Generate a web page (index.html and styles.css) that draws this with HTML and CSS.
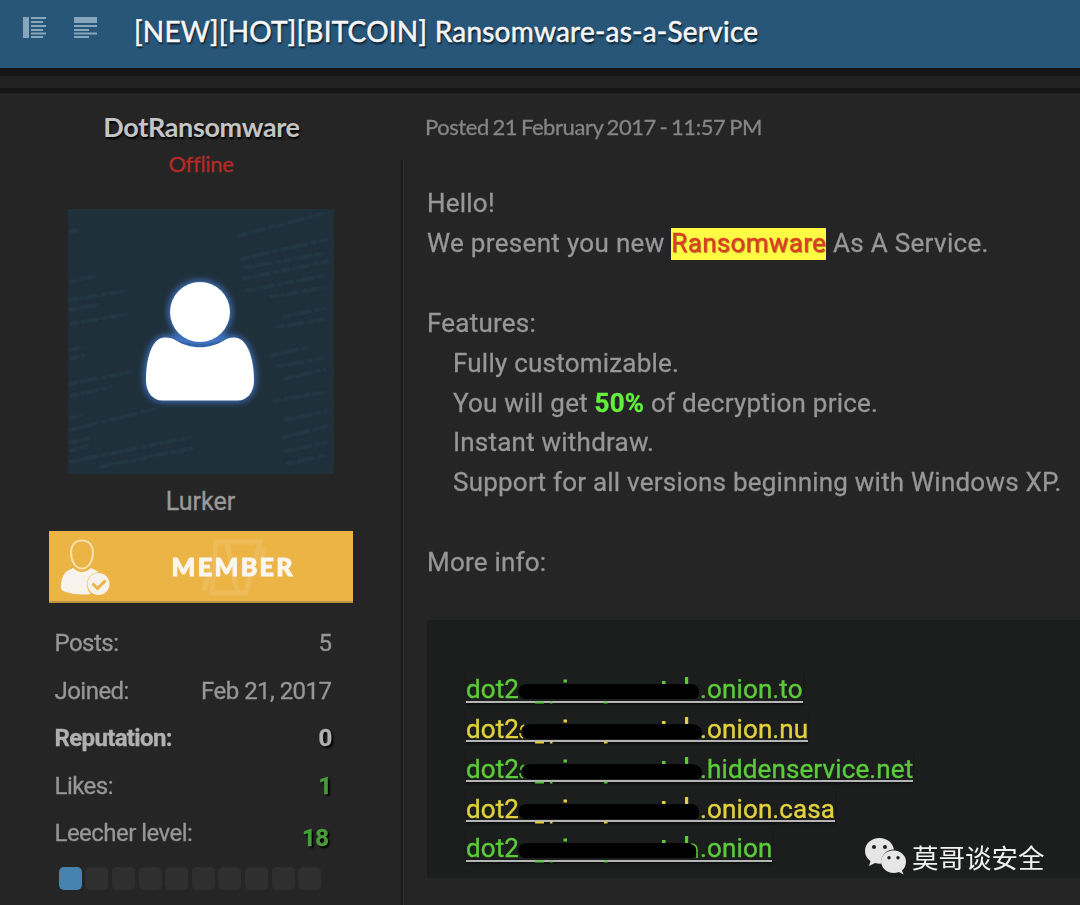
FILE: index.html
```html
<!DOCTYPE html>
<html lang="en">
<head>
<meta charset="utf-8">
<title>Ransomware-as-a-Service</title>
<link rel="stylesheet" href="styles.css">
</head>
<body>
<svg class="defs" width="0" height="0" aria-hidden="true">
  <defs>
    <g id="scraps" fill="currentColor">
      <rect x="16" y="29.500" width="9" height="2"/>
      <rect x="31" y="29.500" width="2.500" height="2"/>
      <rect x="85" y="29.500" width="3.500" height="2"/>
      <rect x="44.500" y="7.500" width="3.500" height="3"/>
      <rect x="143" y="9" width="3.500" height="3"/>
      <rect x="166" y="5" width="3.200" height="9"/>
    </g>
  </defs>
</svg>
<header class="topbar">
  <svg class="tool" width="24" height="22" viewBox="0 0 24 22"><path d="M0 0h6v21H0zM8 0h15v2H8zM8 4h12v2H8zM8 8h15v2H8zM8 12h12v2H8zM8 15.500h15v2H8zM8 19h12v2H8z"/></svg>
  <svg class="tool" width="24" height="22" viewBox="0 0 24 22"><path d="M0 0h23v6H0zM0 8h23v2H0zM0 12h15v2H0zM0 15.500h23v2H0zM0 19h15v2H0z"/></svg>
  <h1 class="title">[NEW][HOT][BITCOIN] Ransomware-as-a-Service</h1>
</header>
<div class="strip"></div>
<main class="post">
  <aside class="author">
    <div class="name">DotRansomware</div>
    <div class="status">Offline</div>
    <svg class="avatar" width="266" height="265" viewBox="0 0 266 265">
      <defs>
        <filter id="glow" x="-30%" y="-30%" width="160%" height="160%"><feGaussianBlur stdDeviation="3"/></filter>
        <filter id="soft"><feGaussianBlur stdDeviation="1"/></filter>
      </defs>
      <rect width="266" height="265" fill="#20303b"/>
      <g class="code" filter="url(#soft)">
        <path d="M2 23l10-3M1 73l26-6M1 91l55-9M1 101l32-6M2 115l58-10M2 141l12-3M2 150l15-4M1 175l62-12M2 187l42-9M1 209l13-3M2 221l88-22M2 234l20-5M2 242l18-5M2 253l38-8 84-17M32 258l94-19"/>
        <path d="M170 27l88-23M173 50l88-20M176 59l80-15M174 70l88-18M178 82l80-16M202 88l58-10M215 108l42-9M208 118l50-8M202 147l38-9M208 158l48-9M216 170l42-10M205 192l52-9M216 211l44-9M214 229l46-12M216 243l43-10M218 255l40-9"/>
      </g>
      <g>
        <g fill="#3f74c4" stroke="#3d6eb8" stroke-width="4" filter="url(#glow)"><circle cx="132" cy="103" r="30"/><path d="M99 128c-15 0-21 20-21 43 0 14 8 20 18 20h72c10 0 18-6 18-20 0-23-7-43-23-43z"/></g>
        <path fill="#3565a8" d="M99 128q33 14 64 0v15H99z"/>
        <path fill="#fff" d="M97 128.500c-13 0-19 20-19 43 0 13 8 20 16 20h76c8 0 16-7 16-20 0-23-7-43-20-43q-6 0-10 3c-14 9-34 9-48 0q-4-3-11-3z"/>
        <circle cx="132" cy="103" r="30" fill="#fff"/>
      </g>
    </svg>
    <div class="rank">Lurker</div>
    <div class="badge">
      <svg class="badge-art" width="304" height="72" viewBox="0 0 304 72">
        <g fill="none" stroke="#f0c26c" stroke-width="5" opacity=".5"><path d="M167 11h44l-14 51h-34zM155 60l7-24M211 36l4-20M178 13l10 47"/></g>
        <path d="M33 9.500c7 0 11 5 11 12 0 8-4 16-11 16s-11-8-11-16c0-7 4-12 11-12z" fill="none" stroke="#f6dfae" stroke-width="2"/>
        <path fill="#f7f3ec" d="M24 37q9 8 18 0l8 4q-12 2-12 13 0 5 4 9-15 2-28-3-3-2-2-7 1-9 6-13z"/>
        <circle cx="49.500" cy="53" r="11" fill="#f7f3ec"/>
        <path d="M43.500 52.500l5 5 8-8" fill="none" stroke="#ebb445" stroke-width="3"/>
      </svg>
      <span class="badge-text">MEMBER</span>
    </div>
    <dl class="stats">
      <div class="row"><dt>Posts:</dt><dd>5</dd></div>
      <div class="row"><dt>Joined:</dt><dd>Feb 21, 2017</dd></div>
      <div class="row strong"><dt>Reputation:</dt><dd>0</dd></div>
      <div class="row"><dt>Likes:</dt><dd class="green">1</dd></div>
      <div class="row"><dt>Leecher level:</dt><dd class="green level">18</dd></div>
    </dl>
    <div class="pips"><i class="on"></i><i></i><i></i><i></i><i></i><i></i><i></i><i></i><i></i><i></i></div>
  </aside>
  <div class="divider"></div>
  <article class="content">
    <div class="posted">Posted 21 February 2017 - 11:57 PM</div>
    <div class="message">
      <p>Hello!</p>
      <p class="offer">We present you new <mark>Ransomware</mark> As A Service.</p>
      <p>&nbsp;</p>
      <p>Features:</p>
      <ul>
        <li>Fully customizable.</li>
        <li>You will get <b>50%</b> of decryption price.</li>
        <li>Instant withdraw.</li>
        <li>Support for all versions beginning with Windows XP.</li>
      </ul>
      <p>&nbsp;</p>
      <p>More info:</p>
    </div>
    <div class="links">
      <a class="g"><span>dot2</span><svg width="181" height="36" viewBox="0 0 181 36"><use href="#scraps"/><path class="ink" d="M0 16q3-4 9-4h164q7 1 7 8t-5 7H5q-7-3-5-11z"/></svg><span>.onion.to</span></a>
      <a class="y"><span>dot2</span><svg width="181" height="36" viewBox="0 0 181 36"><use href="#scraps"/><path class="bit" d="M5 13q-4 2-3 5M1 21q0 4 3 5"/><path class="ink" d="M4 16q3-4 9-4h160q10 2 10 8t-5 7H9q-7-3-5-11z"/></svg><span>.onion.nu</span></a>
      <a class="g"><span>dot2</span><svg width="181" height="36" viewBox="0 0 181 36"><use href="#scraps"/><path class="bit" d="M5 13q-4 2-3 5M1 21q0 4 3 5"/><path class="ink" d="M4 16q3-4 9-4h160q10 2 10 8t-5 7H9q-7-3-5-11z"/></svg><span>.hiddenservice.net</span></a>
      <a class="y"><span>dot2</span><svg width="181" height="36" viewBox="0 0 181 36"><use href="#scraps"/><path class="ink" d="M0 16q3-4 9-4h164q7 1 7 8t-5 7H5q-7-3-5-11z"/></svg><span>.onion.casa</span></a>
      <a class="g"><span>dot2</span><svg width="181" height="36" viewBox="0 0 181 36"><use href="#scraps"/><path class="bit" d="M172 13q6 0 6 6v8"/><path class="ink" d="M0 16q3-4 9-4h160q7 1 8 8t-5 7H5q-7-3-5-11z"/></svg><span>.onion</span></a>
    </div>
  </article>
</main>
<div class="watermark">
  <svg width="42" height="37" viewBox="0 0 42 37">
    <path fill="#e6e6e6" fill-rule="evenodd" d="M14.500 0C6.500 0 0 5.500 0 13c0 4 2 7.500 5.500 10L4 28l6-3q3 1 6 .7A13 13 0 0 1 29 11.500C28 5 22 0 14.500 0zM9 7a2 2 0 1 1 0 4 2 2 0 0 1 0-4zm11 0a2 2 0 1 1 0 4 2 2 0 0 1 0-4z"/>
    <path fill="#e6e6e6" fill-rule="evenodd" d="M28.500 12.500C21.500 12.500 16 17.500 16 23.500S21.500 35 28.500 35q3 0 5.500-1l4.500 2.500L37 32.500q4-3.500 4-9c0-6-5.500-11-12.500-11zM24 18a1.700 1.700 0 1 1 0 3.400 1.700 1.700 0 0 1 0-3.400zm9 0a1.700 1.700 0 1 1 0 3.400 1.700 1.700 0 0 1 0-3.400z"/>
  </svg>
  <span>莫哥谈安全</span>
</div>
</body>
</html>
```
FILE: styles.css
```css
* { box-sizing: border-box; }
body {
  margin: 0;
  width: 1080px;
  height: 905px;
  overflow: hidden;
  background: #252525;
  color: #979797;
  font-family: Roboto, "Liberation Sans", sans-serif;
  display: flex;
  flex-direction: column;
}
p, ul, dl, dd, h1 { margin: 0; padding: 0; }
.defs { position: absolute; }

.topbar {
  flex: none;
  height: 68px;
  background: #275679;
  display: flex;
  align-items: flex-start;
  padding-left: 23px;
}
.tool { margin: 17px 27px 0 0; fill: #87a6bb; flex: none; }
.title {
  margin-left: 9px;
  font: 400 28px/62px Lato, sans-serif;
  letter-spacing: .23px;
  color: #f4f6f7;
  -webkit-text-stroke: .5px #f4f6f7;
  text-shadow: 1px 2px 2px rgba(0, 0, 0, .75);
  white-space: nowrap;
}
.strip {
  flex: none;
  height: 25px;
  background: #222;
  border-top: 8px solid #151515;
  border-bottom: 5px solid #151515;
}

.post { flex: 1; display: flex; }
.author {
  width: 401px;
  display: flex;
  flex-direction: column;
  align-items: center;
  padding-top: 16px;
}
.name {
  padding-left: 2px;
  font: 700 27px/36px Lato, sans-serif;
  letter-spacing: -.35px;
  color: #c4c4c4;
  text-shadow: 1px 2px 2px #000;
}
.status {
  padding-left: 1px;
  font: 400 22px/38px Lato, sans-serif;
  letter-spacing: -.3px;
  color: #b52a25;
  -webkit-text-stroke: .3px #b52a25;
}
.avatar { display: block; margin-top: 26px; flex: none; }
.code path {
  fill: none;
  stroke: #2b4454;
  stroke-width: 3;
  stroke-dasharray: 9 2 4 1 13 3 6 2;
  opacity: .5;
}
.rank {
  padding-top: 1px;
  font: 400 25px/54px Roboto, sans-serif;
  color: #999;
  -webkit-text-stroke: .3px #999;
}
.badge {
  flex: none;
  width: 304px;
  height: 72px;
  margin-top: 2px;
  display: grid;
  background: #ebb445;
  border-bottom: 2px solid #bd9142;
}
.badge-art, .badge-text { grid-area: 1 / 1; }
.badge-text {
  padding-left: 123px;
  font: 900 25px/71px Lato, sans-serif;
  letter-spacing: 2.400px;
  color: #faf6ef;
  -webkit-text-stroke: 1px #faf6ef;
}
.stats { width: 277px; margin-top: 17px; margin-left: -15px; }
.row {
  height: 47.500px;
  display: flex;
  justify-content: space-between;
  font-size: 24px;
  line-height: 47.500px;
  letter-spacing: -.53px;
  -webkit-text-stroke: .3px;
}
.strong { font-weight: 700; color: #b0b0b0; letter-spacing: -.65px; }
.strong dd, .green { text-shadow: 2px 2px 2px #000; }
.green { color: #479e38; font-weight: 700; }
.level { padding: 5px 3px 0 0; }
.pips { display: flex; gap: 3.600px; margin: 9px 0 0 -21px; }
.pips i { width: 23px; height: 23px; border-radius: 5px; background: #2f2f2f; }
.pips .on { background: #4682ae; }
.divider {
  width: 3px;
  margin-top: 67px;
  background: linear-gradient(90deg, #1b1b1b 1.500px, #2f2f2f 1.500px);
}

.content { flex: 1; min-width: 0; }
.posted {
  padding: 17px 0 0 21px;
  font: 400 22px/34px Lato, sans-serif;
  letter-spacing: -.43px;
  word-spacing: -1.500px;
  color: #858585;
  -webkit-text-stroke: .3px #858585;
}
.message {
  margin: 40px 0 0 23px;
  font-size: 26px;
  line-height: 39.900px;
  letter-spacing: .22px;
  -webkit-text-stroke: .3px;
  white-space: nowrap;
}
.message .offer { letter-spacing: .32px; }
.message ul { list-style: none; padding-left: 26px; }
.message mark {
  padding-bottom: 2px;
  background: #fffb44;
  color: #dd3b25;
  text-shadow: 1px 1px 1px rgba(110, 60, 0, .6);
}
.message b { color: #62f03c; }
.links {
  height: 258px;
  margin: 37px 0 0 23px;
  padding: 49px 0 0 39px;
  background: #1c1e1d;
  display: flex;
  flex-direction: column;
  align-items: flex-start;
}
.links a {
  height: 33.500px;
  margin-bottom: 6.350px;
  display: flex;
  font-size: 26px;
  line-height: 40px;
  letter-spacing: .12px;
  -webkit-text-stroke: .35px;
  border-bottom: 2.500px solid #b5b5b5;
  box-shadow: 0 2px 2px rgba(0, 0, 0, .5);
}
.links svg { display: block; overflow: visible; margin-top: 3px; -webkit-text-stroke: 0; }
.g { color: #5ccb3b; }
.y { color: #e2d13e; }
.ink { fill: #000; }
.bit { fill: none; stroke: currentColor; stroke-width: 1.500; }

.watermark {
  position: absolute;
  left: 865px;
  top: 838px;
  display: flex;
  gap: 5px;
  font: 400 26.500px/37px "Noto Sans CJK SC", sans-serif;
  color: #f2f2f2;
}
```
